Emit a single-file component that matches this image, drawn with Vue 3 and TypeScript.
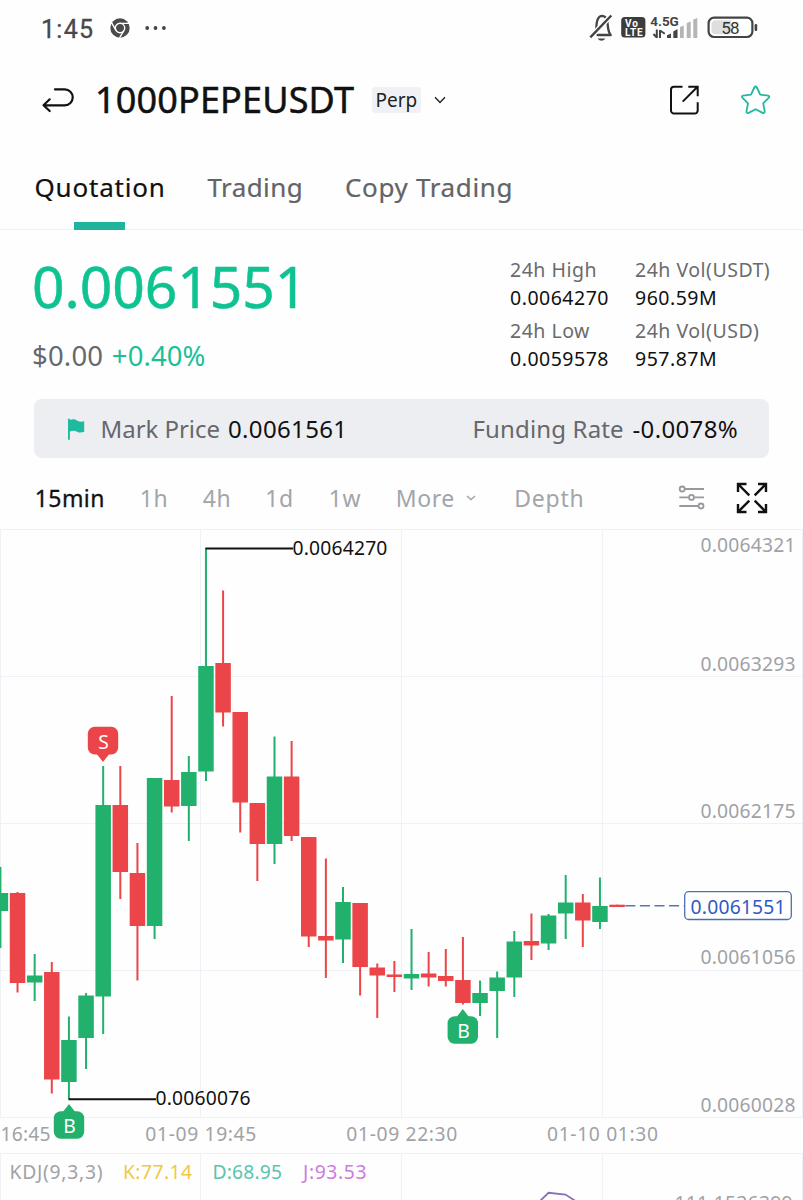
<script setup lang="ts">
interface Candle { up: boolean; top: number; bottom: number; high: number; low: number }
interface Marker { kind: 'S' | 'B'; x: number; tip: number }

const tabs = [
  { label: 'Quotation', cls: 'quotation' },
  { label: 'Trading', cls: 'trading' },
  { label: 'Copy Trading', cls: 'copy' },
]

const stats = [
  [{ label: '24h High', value: '0.0064270' }, { label: '24h Low', value: '0.0059578' }],
  [{ label: '24h Vol(USDT)', value: '960.59M' }, { label: '24h Vol(USD)', value: '957.87M' }],
]

const pitch = 17.13
const cx = (i: number): number => 0.4 + i * pitch

const raw: [number, number, number, number, number][] = [
  [1, 893, 911, 867, 948], [0, 893, 983, 892, 992.5], [1, 975.5, 982.5, 954, 1001],
  [0, 972, 1079.5, 962, 1093.5], [1, 1040, 1082, 1016.5, 1099], [1, 995.5, 1038, 993, 1069],
  [1, 805, 996.5, 766, 1034], [0, 805, 872, 766, 899], [0, 873, 926, 843, 980.5],
  [1, 778, 926, 778, 939], [0, 780, 806.5, 696, 812.5], [1, 772, 806, 756, 841],
  [1, 666, 771.5, 548, 781], [0, 663, 712.5, 590.5, 726.5], [0, 712, 802.5, 712, 832.5],
  [0, 803, 844, 803, 881], [1, 776.5, 844, 736.5, 864], [0, 776.5, 836, 741, 841],
  [0, 837, 936.5, 837, 947], [0, 936, 940.5, 858.5, 978], [1, 902, 939.5, 887, 963],
  [0, 903, 967, 903, 995.5], [0, 967.5, 975.5, 963.5, 1018], [0, 974.5, 977, 961, 992],
  [1, 974, 978.5, 929, 990], [0, 973.5, 977.5, 952, 986.5], [0, 976, 981, 949, 986.5],
  [0, 980, 1003, 937, 1004.5], [1, 993, 1003, 980.5, 1016], [1, 977.5, 991, 971.5, 1038],
  [1, 941.5, 977.5, 931, 997], [0, 941, 945.5, 913.5, 960], [1, 915.5, 943.5, 914, 950],
  [1, 902.5, 913.5, 875, 939], [0, 902.5, 920.5, 894, 947], [1, 906, 922, 877.5, 929],
  [0, 904.7, 907, 904.7, 907],
]
const candles: Candle[] = raw.map(([u, top, bottom, high, low]) => ({ up: u === 1, top, bottom, high, low }))

const priceLabels = [
  { y: 552, text: '0.0064321' }, { y: 671, text: '0.0063293' }, { y: 818, text: '0.0062175' },
  { y: 964.3, text: '0.0061056' }, { y: 1112, text: '0.0060028' },
]
const timeLabels = [
  { x: 145.3, text: '01-09 19:45' }, { x: 346.3, text: '01-09 22:30' }, { x: 547, text: '01-10 01:30' },
]
const kdj = [
  { x: 9.5, w: 93, text: 'KDJ(9,3,3)', cls: 'muted' },
  { x: 123, w: 69, text: 'K:77.14', cls: 'k' },
  { x: 212.5, w: 69.5, text: 'D:68.95', cls: 'd' },
  { x: 303, w: 63.5, text: 'J:93.53', cls: 'j' },
]
const markers: Marker[] = [
  { kind: 'S', x: 103, tip: 762 },
  { kind: 'B', x: 69, tip: 1104 },
  { kind: 'B', x: 462.8, tip: 1009 },
]
</script>

<template>
  <div class="screen">
    <div class="status">
      <span class="clock">1:45</span>
      <svg class="chrome" width="20" height="20" viewBox="0 0 20 20">
        <circle cx="10" cy="10" r="9.7" fill="#4a4a4a" />
        <circle cx="10" cy="10" r="4.7" fill="none" stroke="#fff" stroke-width="1.4" />
        <path d="M10 5.4H19M6 12.3L1.5 4.6M14 12.3L9.6 19.8" fill="none" stroke="#fff" stroke-width="1.4" />
      </svg>
      <svg class="dots" width="22" height="6" viewBox="0 0 22 6">
        <circle cx="2.2" cy="3" r="1.9" /><circle cx="10.5" cy="3" r="1.9" /><circle cx="18.9" cy="3" r="1.9" />
      </svg>
      <svg class="system" width="172" height="34" viewBox="588 11 172 34">
        <path d="M594.5 33.5C597 31.5 596 25 597 21.5C598 17.5 600 16 602 15.9C604 16 606.5 17.5 607.3 21.5C608 25 607.5 31 610.7 35H597.5" fill="none" stroke="#444" stroke-width="2.3" stroke-linecap="round" stroke-linejoin="round" />
        <path d="M590.3 37.3L611.3 15.5" stroke="#fff" stroke-width="5" />
        <path d="M590.3 37.3L611.3 15.5" stroke="#444" stroke-width="2.4" />
        <path d="M597.5 38.5Q601.5 43 605.5 38.5Z" fill="#444" />
        <rect x="621.2" y="17" width="24.2" height="20.6" rx="3.5" fill="#3c3c3c" />
        <text x="625" y="26.7" class="volte" textLength="13">Vo</text>
        <text x="625" y="35.7" class="volte" textLength="17.5">LTE</text>
        <text x="650.3" y="26" class="net" textLength="28.5" lengthAdjust="spacingAndGlyphs">4.5G</text>
        <path d="M656.8 29.5V38M660 38V30M653.4 34L656.8 37.5M660 30.5L664.8 33.8" fill="none" stroke="#444" stroke-width="2" />
        <path d="M667 38V35.3L671 33.5V38ZM673.3 38V31.5L677.5 29V38Z" fill="#444" />
        <path d="M680 38V27L683.8 25.5V38ZM686.7 38V23L690.7 21.5V38ZM693.3 38V19.5L697.3 18V38Z" fill="#b5b5b5" />
        <rect x="708.6" y="17.6" width="43.8" height="19.4" rx="5.5" fill="#fff" stroke="#444" stroke-width="2.2" />
        <path d="M716 20.3H731V34.3H716Q711.5 34.3 711.5 30V24.5Q711.5 20.3 716 20.3Z" fill="#dedede" />
        <text x="721.3" y="34" class="battery" textLength="18.2">58</text>
        <rect x="754.6" y="24" width="2.6" height="7" rx="1.2" fill="#444" />
      </svg>
    </div>

    <header class="header">
      <svg class="back" width="34" height="28" viewBox="41 86 34 28">
        <path d="M55 89.4H64.8A7.9 7.9 0 0 1 64.8 105.3H44M49.7 99.3L43.5 105.3L49.7 111" fill="none" stroke="#111" stroke-width="2.2" stroke-linecap="round" stroke-linejoin="round" />
      </svg>
      <h1 class="pair">1000PEPEUSDT</h1>
      <span class="perp">Perp</span>
      <svg class="caret" width="12" height="8" viewBox="0 0 12 8">
        <path d="M1 1.2L6 6.4L11 1.2" fill="none" stroke="#222" stroke-width="1.4" />
      </svg>
      <svg class="share" width="32" height="32" viewBox="669 84 32 32">
        <path d="M682.5 86.7H674A3 3 0 0 0 671 89.7V110.5A3 3 0 0 0 674 113.5H694.5A3 3 0 0 0 697.7 110.5V102.3M688.3 86.7H697.7V96.3M697.3 87L682.7 101.6" fill="none" stroke="#111" stroke-width="2" />
      </svg>
      <svg class="star" width="32" height="32" viewBox="740 84 32 32">
        <path d="M754.3 87.5Q755.6 85.5 756.9 87.5L760.2 94.6L768 95.6Q770.2 96.1 768.6 97.9L763.2 103.3L764.7 111.2Q764.8 113.7 762.6 112.9L755.6 109.2L748.6 112.9Q746.4 113.7 746.5 111.2L748 103.3L742.6 97.9Q741 96.1 743.2 95.6L751 94.6Z" fill="none" stroke="#25b69d" stroke-width="1.8" stroke-linejoin="round" />
      </svg>
    </header>

    <nav class="tabs">
      <div v-for="(t, i) in tabs" :key="t.label" class="tab" :class="[t.cls, { active: i === 0 }]">{{ t.label }}</div>
    </nav>

    <section class="summary">
      <div class="price">
        <div class="last">0.0061551</div>
        <div class="change"><span>$0.00</span><span class="pct">+0.40%</span></div>
      </div>
      <div v-for="(col, c) in stats" :key="c" class="col">
        <div v-for="s in col" :key="s.label" class="stat">
          <div class="lbl">{{ s.label }}</div>
          <div>{{ s.value }}</div>
        </div>
      </div>
    </section>

    <section class="info">
      <svg class="flag" width="18" height="22" viewBox="67 417.5 18 22">
        <path d="M68 418.2H69.9V419.5C73 418 75.5 418.8 77.5 420.2C79.5 421.3 81.7 421.4 84.2 420.8V431.2C81.5 432.2 79.3 432.4 77 431.2C74.7 430 72.5 430 69.9 431V439.2H68Z" fill="#1fb9a0" />
      </svg>
      <span class="k1">Mark Price</span><span class="v1">0.0061561</span>
      <span class="k2">Funding Rate</span><span class="v1">-0.0078%</span>
    </section>

    <section class="intervals">
      <span class="i15">15min</span><span class="i1h">1h</span><span class="i4h">4h</span><span class="i1d">1d</span><span class="i1w">1w</span>
      <span class="more">More</span>
      <svg class="tiny" width="10" height="6" viewBox="0 0 10 6"><path d="M1 1L5 4.6L9 1" fill="none" stroke="#a2a5a9" stroke-width="1.5" /></svg>
      <span class="depth">Depth</span>
      <svg class="sliders" width="28" height="26" viewBox="678 485 28 26">
        <g fill="none" stroke="#97999d" stroke-width="1.8">
          <path d="M685 489H704M679.3 497.4H688.5M694.5 497.4H704M679.3 506H698" />
          <circle cx="682.2" cy="489" r="2.5" /><circle cx="691.5" cy="497.4" r="2.5" /><circle cx="701" cy="506" r="2.5" />
        </g>
      </svg>
      <svg class="expand" width="32" height="32" viewBox="736 482 32 32">
        <path d="M738 492V484H746.5M738 484L749.3 495.3M758 484H766V492M766 484L754.7 495.3M738 504V512H746.5M738 512L749.3 500.7M758 512H766V504M766 512L754.7 500.7" fill="none" stroke="#111" stroke-width="2.4" />
      </svg>
    </section>

    <svg class="chart" width="803" height="671" viewBox="0 529 803 671">
      <g class="grid">
        <path d="M0 529.5H803M0 676.5H803M0 823.5H803M0 970.5H803M0 1117.5H803M0 1153.5H803" />
        <path d="M0.5 529V1117M200.5 529V1117M401.5 529V1117M602.5 529V1117M802.5 529V1117" />
        <path d="M0.5 1153V1200M200.5 1153V1200M401.5 1153V1200M602.5 1153V1200M802.5 1153V1200" />
      </g>
      <g v-for="(c, i) in candles" :key="i" :class="c.up ? 'up' : 'down'">
        <rect :x="cx(i) - 1" :y="c.high" width="2" :height="c.low - c.high" />
        <rect :x="cx(i) - 7.75" :y="c.top" width="15.5" :height="c.bottom - c.top" />
      </g>
      <path d="M205.5 548.5H293M68.5 1099.3H156" stroke="#111" stroke-width="2" />
      <text x="292.4" y="554.6" class="extreme" textLength="95">0.0064270</text>
      <text x="155.5" y="1105" class="extreme" textLength="95">0.0060076</text>
      <path d="M625.3 905.8H684" stroke="#5577b0" stroke-width="1.4" stroke-dasharray="10 4.6" />
      <rect x="684.7" y="891.7" width="106.6" height="27.8" rx="4" fill="#fff" stroke="#4a70ae" stroke-width="1.3" />
      <text x="690.6" y="913.7" class="tag" textLength="95">0.0061551</text>
      <text v-for="p in priceLabels" :key="p.text" x="700.5" :y="p.y" class="muted" textLength="95">{{ p.text }}</text>
      <text x="0.5" y="1141" class="muted" textLength="50">16:45</text>
      <text v-for="t in timeLabels" :key="t.text" :x="t.x" y="1141" class="muted" textLength="111">{{ t.text }}</text>
      <text v-for="k in kdj" :key="k.text" :x="k.x" y="1179" :class="k.cls" :textLength="k.w">{{ k.text }}</text>
      <text x="674.5" y="1209.7" class="muted" textLength="118">111.1536399</text>
      <path d="M539 1202L548.5 1192.8L565.5 1194.5L577 1202" fill="none" stroke="#8b70b3" stroke-width="1.8" />
      <g v-for="(m, i) in markers" :key="i" :class="m.kind === 'B' ? 'up' : 'down'">
        <template v-if="m.kind === 'B'">
          <path :d="`M${m.x} ${m.tip}L${m.x + 7} ${m.tip + 9}H${m.x - 7}Z`" />
          <rect :x="m.x - 15.2" :y="m.tip + 7.2" width="30.4" height="27.6" rx="7" />
          <text :x="m.x + 0.6" :y="m.tip + 28.6" class="letter">B</text>
        </template>
        <template v-else>
          <path :d="`M${m.x} ${m.tip}L${m.x + 7} ${m.tip - 9}H${m.x - 7}Z`" />
          <rect :x="m.x - 15.2" :y="m.tip - 35.2" width="30.4" height="27.8" rx="7" />
          <text :x="m.x + 0.6" :y="m.tip - 13.3" class="letter">S</text>
        </template>
      </g>
    </svg>
  </div>
</template>

<style>
body { margin: 0; background: #fefefe; }
</style>

<style scoped>
.screen {
  width: 803px;
  height: 1200px;
  overflow: hidden;
  background: #fefefe;
  color: #111;
  font-family: "Noto Sans", "Open Sans", sans-serif;
  white-space: nowrap;
}
svg { display: block; flex: none; }
.status { display: flex; align-items: center; height: 56px; padding-left: 41px; }
.clock { width: 68.5px; font: 25px/30px Roboto, sans-serif; letter-spacing: 1.3px; color: #484848; padding-top: 3px; -webkit-text-stroke: 0.3px #484848; }
.dots { margin: 0 0 1px 15.5px; fill: #444; }
.system { margin-left: 421px; }
.volte { font: 700 10px Roboto, sans-serif; fill: #fff; }
.net { font: 700 13px Roboto, sans-serif; fill: #444; }
.battery { font: 17px Roboto, sans-serif; fill: #333; }

.header { display: flex; align-items: center; height: 88px; padding-left: 41px; }
.pair { margin: 0 0 0 20px; width: 277px; font-size: 36px; font-weight: 400; line-height: 50px; letter-spacing: 0.15px; -webkit-text-stroke: 0.5px #111; }
.perp { box-sizing: border-box; width: 49px; height: 26px; padding-left: 3.5px; border-radius: 4px; background: #f0f1f4; font-size: 19px; line-height: 27px; color: #222; letter-spacing: 0; }
.caret { margin-left: 13px; }
.share { margin-left: 223px; }
.star { margin-left: 39px; }

.tabs { box-sizing: border-box; display: flex; height: 86px; border-bottom: 1px solid #f0f1f3; padding-left: 34.5px; font-size: 26px; line-height: 70px; color: #626467; }
.tab { box-sizing: border-box; height: 86px; padding-top: 8px; -webkit-text-stroke: 0.2px currentColor; }
.quotation { width: 173px; letter-spacing: 0.8px; }
.trading { width: 137.5px; letter-spacing: 0.4px; }
.copy { letter-spacing: 0.65px; }
.active { color: #111; }
.active::after { content: ""; display: block; width: 51.5px; height: 8px; margin-left: 39px; background: #1fb59c; }

.summary { box-sizing: border-box; display: flex; height: 169px; padding-left: 32px; }
.price { width: 478px; }
.last { margin-top: 20.5px; font-size: 57px; line-height: 70px; letter-spacing: -0.1px; color: #0fc391; -webkit-text-stroke: 0.5px #0fc391; }
.change { display: flex; margin-top: 17px; font-size: 27.5px; line-height: 36px; color: #66686b; letter-spacing: 0.2px; }
.pct { margin-left: 8.5px; color: #1cc097; letter-spacing: 0.1px; }
.col { width: 125px; padding-top: 26.2px; font-size: 19.5px; line-height: 28.3px; letter-spacing: 0.5px; }
.stat { margin-bottom: 4.1px; }
.lbl { color: #696b6e; }

.info { display: flex; align-items: center; width: 734.5px; height: 59px; margin-left: 34px; border-radius: 8px; background: #edeef2; font-size: 24px; line-height: 59px; }
.flag { margin-left: 33px; }
.k1 { width: 127.5px; margin-left: 15.5px; color: #66686b; letter-spacing: -0.05px; }
.v1 { letter-spacing: 0.35px; }
.k1 + .v1 { width: 244.5px; }
.k2 { width: 160px; color: #66686b; letter-spacing: 0.15px; }

.intervals { display: flex; align-items: center; height: 71px; padding-left: 34.7px; font-size: 23px; line-height: 33px; letter-spacing: 0.6px; color: #a2a5a9; }
.intervals > span { margin-top: 10.5px; }
.i15 { width: 105px; color: #111; letter-spacing: 0.45px; -webkit-text-stroke: 0.3px #111; }
.i1h { width: 63px; }
.i4h { width: 62.5px; }
.i1d { width: 63.5px; }
.i1w { width: 67px; }
.more { width: 70.5px; }
.tiny { margin-top: 8px; }
.depth { width: 164px; margin-left: 38px; letter-spacing: 0.8px; }
.sliders { margin-top: 8px; }
.expand { margin: 8px 0 0 30px; }

.chart { font-family: "Noto Sans", "Open Sans", sans-serif; font-size: 19.3px; }
.grid path { fill: none; stroke: #eef1f6; stroke-width: 1; }
.up { fill: #21b16c; }
.down { fill: #ec4549; }
.extreme { fill: #111; }
.tag { fill: #2f5bc0; }
.muted { fill: #a0a2a6; }
.k { fill: #efc944; }
.d { fill: #59c4af; }
.j { fill: #cc7cdf; }
.letter { fill: #fff; text-anchor: middle; }
</style>
